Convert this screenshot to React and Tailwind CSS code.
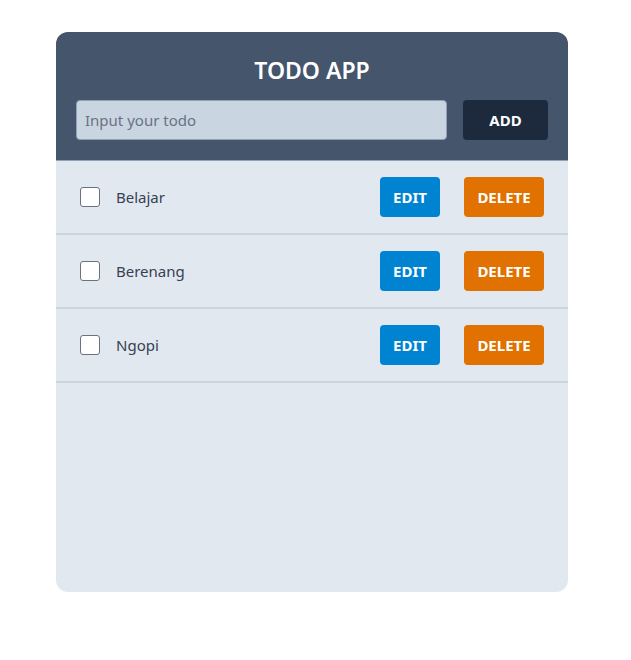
import React from "react";

const TODOS = ["Belajar", "Berenang", "Ngopi"];

function TodoRow({ text }) {
  return (
    <div className="flex items-center border-b-2 border-slate-300 py-4 pl-6 pr-6">
      <input
        type="checkbox"
        className="h-5 w-5 appearance-none rounded-[3px] border border-gray-500 bg-white"
      />
      <span className="ml-4 flex-1 text-[15px] text-gray-700">{text}</span>
      <button className="h-10 w-[60px] rounded bg-sky-600 text-[15px] font-bold text-white">
        EDIT
      </button>
      <button className="ml-6 h-10 w-20 rounded bg-amber-600 text-[15px] font-bold text-white">
        DELETE
      </button>
    </div>
  );
}

export default function App() {
  const [todo, setTodo] = React.useState("");

  return (
    <div className="min-h-screen bg-white pt-8" style={{ fontFamily: '"Noto Sans", "Open Sans", sans-serif' }}>
      <div className="ml-14 flex h-[560px] w-[512px] flex-col overflow-hidden rounded-xl bg-slate-200">
        {/* header + input */}
        <div className="border-b border-slate-400 bg-slate-600 px-5 pb-5 pt-6">
          <h1 className="text-center text-[23px] font-semibold leading-7 text-white">TODO APP</h1>
          <div className="mt-4 flex gap-4">
            <input
              value={todo}
              onChange={(e) => setTodo(e.target.value)}
              placeholder="Input your todo"
              className="h-10 flex-1 rounded-sm border border-slate-400 bg-slate-300 px-2 text-[15px] text-gray-700 placeholder:text-gray-500 outline-none"
            />
            <button className="h-10 w-[85px] rounded bg-slate-800 text-[15px] font-bold text-white">
              ADD
            </button>
          </div>
        </div>

        {TODOS.map((t) => (
          <TodoRow key={t} text={t} />
        ))}
      </div>
    </div>
  );
}
